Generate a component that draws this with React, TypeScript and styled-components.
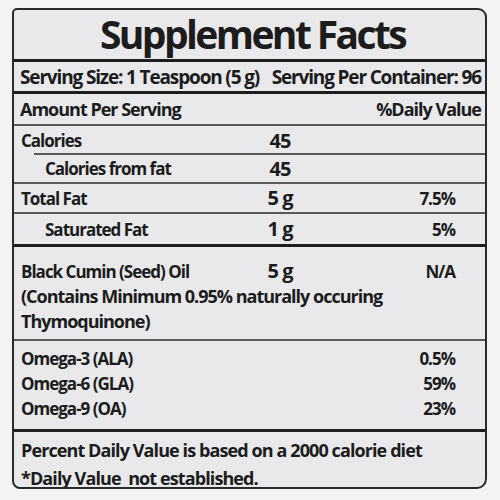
import React from "react";
import styled, { createGlobalStyle } from "styled-components";

const GlobalStyle = createGlobalStyle`
  html, body {
    margin: 0;
    padding: 0;
    background: #f3f3f3;
  }
  body {
    font-family: "Open Sans", "Liberation Sans", sans-serif;
    color: #1c1c1c;
  }
`;

const nutrients = [
  { name: "Calories", amount: "45", dv: "", indent: false, height: 29, line: "indent" },
  { name: "Calories from fat", amount: "45", dv: "", indent: true, height: 29, line: "thin" },
  { name: "Total Fat", amount: "5 g", dv: "7.5%", indent: false, height: 30, line: "thin" },
  { name: "Saturated Fat", amount: "1 g", dv: "5%", indent: true, height: 33, line: "thick" },
];

const omegas = [
  { name: "Omega-3 (ALA)", dv: "0.5%" },
  { name: "Omega-6 (GLA)", dv: "59%" },
  { name: "Omega-9 (OA)", dv: "23%" },
];

const App = () => {
  return (
    <>
      <GlobalStyle />
      <Page>
        <Label>
          <Title>Supplement Facts</Title>
          <ServingRow>
            <span>Serving Size: 1 Teaspoon (5 g)</span>
            <span>Serving Per Container: 96</span>
          </ServingRow>
          <HeadRow>
            <span>Amount Per Serving</span>
            <span>%Daily Value</span>
          </HeadRow>
          {nutrients.map((n) => (
            <NutrientRow key={n.name} h={n.height} line={n.line}>
              <Name indent={n.indent}>{n.name}</Name>
              <Amount>{n.amount}</Amount>
              <Dv>{n.dv}</Dv>
            </NutrientRow>
          ))}
          <OilBlock>
            <OilRow>
              <Name indent={false}>Black Cumin (Seed) Oil</Name>
              <Amount>5 g</Amount>
              <Dv>N/A</Dv>
            </OilRow>
            <Note>
              (Contains Minimum 0.95% naturally occuring
              <br />
              Thymoquinone)
            </Note>
          </OilBlock>
          <OmegaBlock>
            {omegas.map((o) => (
              <OmegaRow key={o.name}>
                <span>{o.name}</span>
                <Dv>{o.dv}</Dv>
              </OmegaRow>
            ))}
          </OmegaBlock>
          <Footer>
            <div>Percent Daily Value is based on a 2000 calorie diet</div>
            <div>*Daily Value&nbsp; not established.</div>
          </Footer>
        </Label>
      </Page>
    </>
  );
};

const Page = styled.div`
  width: 500px;
  height: 500px;
  padding: 8px 13px 0 12px;
  box-sizing: border-box;
`;

const Label = styled.div`
  width: 475px;
  height: 481px;
  box-sizing: border-box;
  border: 2px solid #2a2a2a;
  border-radius: 5px 9px 10px 8px;
  background: #e9e9eb;
  display: flex;
  flex-direction: column;
  overflow: hidden;
`;

const Title = styled.div`
  flex-shrink: 0;
  height: 52px;
  box-sizing: border-box;
  border-bottom: 3px solid #1e1e1e;
  font-size: 39px;
  font-weight: 700;
  letter-spacing: -2.6px;
  text-align: center;
  line-height: 48px;
  padding-left: 6px;
`;

const ServingRow = styled.div`
  flex-shrink: 0;
  height: 32px;
  box-sizing: border-box;
  border-bottom: 3px solid #1e1e1e;
  display: flex;
  justify-content: space-between;
  align-items: center;
  padding: 0 4px 0 6px;
  font-size: 19px;
  font-weight: 700;
  letter-spacing: -1.15px;
`;

const HeadRow = styled.div`
  flex-shrink: 0;
  height: 32px;
  box-sizing: border-box;
  border-bottom: 2px solid #5a5a5a;
  display: flex;
  justify-content: space-between;
  align-items: center;
  padding: 0 4px 0 6px;
  font-size: 18px;
  font-weight: 700;
  letter-spacing: -1px;
`;

const NutrientRow = styled.div<{ h: number; line: string }>`
  flex-shrink: 0;
  height: ${({ h }) => h}px;
  box-sizing: border-box;
  display: grid;
  grid-template-columns: 229px 60px 1fr;
  align-items: center;
  padding: 0 30px 0 7px;
  font-size: 17px;
  font-weight: 700;
  letter-spacing: -1px;
  position: relative;
  border-bottom: ${({ line }) =>
    line === "thick" ? "3px solid #1e1e1e" : line === "thin" ? "2px solid #5a5a5a" : "none"};
  &::after {
    content: "";
    display: ${({ line }) => (line === "indent" ? "block" : "none")};
    position: absolute;
    left: 20px;
    right: 0;
    bottom: 0;
    height: 2px;
    background: #5a5a5a;
  }
`;

const Name = styled.span<{ indent: boolean }>`
  padding-left: ${({ indent }) => (indent ? "24px" : "0")};
`;

const Amount = styled.span`
  font-size: 20px;
  line-height: 24px;
  text-align: center;
`;

const Dv = styled.span`
  text-align: right;
  font-size: 17px;
`;

const OilBlock = styled.div`
  flex-shrink: 0;
  height: 94px;
  box-sizing: border-box;
  border-bottom: 2px solid #5a5a5a;
  padding: 11px 30px 0 7px;
  font-size: 17px;
  font-weight: 700;
  letter-spacing: -1px;
`;

const OilRow = styled.div`
  display: grid;
  grid-template-columns: 229px 60px 1fr;
  align-items: center;
  height: 26px;
`;

const Note = styled.div`
  font-size: 18px;
  line-height: 25px;
`;

const OmegaBlock = styled.div`
  flex-shrink: 0;
  height: 91px;
  box-sizing: border-box;
  border-bottom: 3px solid #1e1e1e;
  padding: 5px 30px 0 7px;
  display: flex;
  flex-direction: column;
`;

const OmegaRow = styled.div`
  display: flex;
  justify-content: space-between;
  align-items: center;
  height: 25px;
  font-size: 17px;
  font-weight: 700;
  letter-spacing: -1px;
`;

const Footer = styled.div`
  flex: 1;
  min-height: 0;
  padding: 4px 0 0 7px;
  font-size: 18px;
  font-weight: 700;
  letter-spacing: -0.9px;
  line-height: 28px;
`;

export default App;
